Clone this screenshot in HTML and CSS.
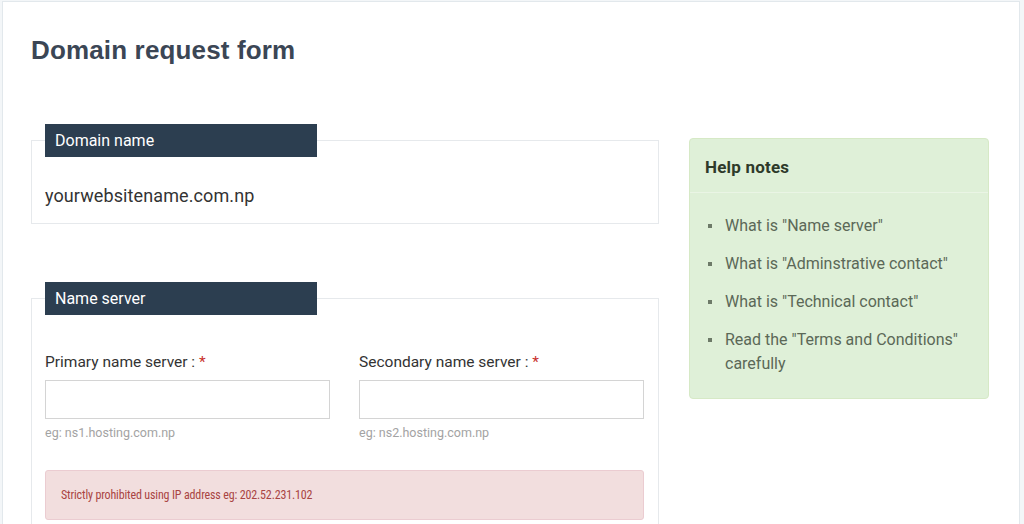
FILE: index.html
```html
<!DOCTYPE html>
<html lang="en">
<head>
<meta charset="utf-8">
<title>Domain request form</title>
<link rel="stylesheet" href="styles.css">
</head>
<body>
<div class="card">
  <h1 class="page-title">Domain request form</h1>
  <div class="layout">
    <div class="main-col">
      <fieldset class="group group-domain">
        <legend class="group-legend">Domain name</legend>
        <div class="domain-value">yourwebsitename.com.np</div>
      </fieldset>
      <fieldset class="group group-ns">
        <legend class="group-legend">Name server</legend>
        <div class="field-row">
          <div class="field">
            <label class="field-label">Primary name server : <span class="req">*</span></label>
            <input class="field-input" type="text">
            <div class="field-hint">eg: ns1.hosting.com.np</div>
          </div>
          <div class="field">
            <label class="field-label">Secondary name server : <span class="req">*</span></label>
            <input class="field-input" type="text">
            <div class="field-hint">eg: ns2.hosting.com.np</div>
          </div>
        </div>
        <div class="alert">Strictly prohibited using IP address eg: 202.52.231.102</div>
      </fieldset>
    </div>
    <aside class="side-col">
      <div class="help-panel">
        <div class="help-heading">Help notes</div>
        <ul class="help-list">
          <li>What is "Name server"</li>
          <li>What is "Adminstrative contact"</li>
          <li>What is "Technical contact"</li>
          <li>Read the "Terms and Conditions" carefully</li>
        </ul>
      </div>
    </aside>
  </div>
</div>
</body>
</html>
```

FILE: styles.css
```css
html, body {
  margin: 0;
  padding: 0;
}
body {
  background: #f3f6f8;
  font-family: Roboto, "Liberation Sans", sans-serif;
  color: #333;
  height: 524px;
  overflow: hidden;
}
.card {
  margin: 1px 4px 0 2px;
  background: #fff;
  border: 1px solid #e2e8ec;
  padding: 0 29px 0 28px;
  height: 560px;
  box-sizing: border-box;
}
.page-title {
  margin: 0;
  padding: 30px 0 0;
  font-family: "Liberation Sans", Arial, sans-serif;
  font-weight: 700;
  font-size: 26px;
  line-height: 36px;
  color: #3b4655;
  letter-spacing: 0.15px;
}
.layout {
  display: flex;
  gap: 30px;
  margin-top: 56px;
  align-items: flex-start;
}
.main-col {
  width: 628px;
  flex: none;
}
.side-col {
  width: 300px;
  flex: none;
  margin-top: 14px;
}
.group {
  margin: 0;
  border: 1px solid #e6e9ec;
  padding: 0 14px 0 13px;
  min-width: 0;
}
.group-legend {
  width: 272px;
  box-sizing: border-box;
  height: 33px;
  padding: 0 10px;
  background: #2c3e50;
  color: #fff;
  font-size: 16px;
  line-height: 33px;
}
.group-domain {
  padding-bottom: 7px;
}
.domain-value {
  padding-top: 19px;
  font-size: 18px;
  line-height: 40px;
  color: #333;
  letter-spacing: 0.1px;
}
.group-ns {
  margin-top: 58px;
  padding-bottom: 20px;
}
.field-row {
  display: grid;
  grid-template-columns: 285px 285px;
  column-gap: 29px;
  padding-top: 36px;
}
.field {
  display: flex;
  flex-direction: column;
}
.field-label {
  font-size: 15.5px;
  line-height: 22px;
  color: #333;
  margin-bottom: 7px;
}
.req {
  color: #c9302c;
}
.field-input {
  box-sizing: border-box;
  height: 39px;
  width: 100%;
  border: 1px solid #d4d4d4;
  margin: 0;
  background: #fff;
}
.field-hint {
  font-size: 12.5px;
  line-height: 14px;
  color: #a3a3a3;
  margin-top: 7px;
}
.alert {
  margin-top: 30px;
  box-sizing: border-box;
  height: 50px;
  padding: 0 15px;
  background: #f2dede;
  border: 1px solid #ebccd1;
  border-radius: 3px;
  color: #a94442;
  font-family: "Liberation Sans Narrow", "Roboto Condensed", Roboto, sans-serif;
  font-size: 12px;
  letter-spacing: -0.15px;
  line-height: 48px;
}
.help-panel {
  background: #dff0d8;
  border: 1px solid #d6e9c6;
  border-radius: 4px;
  height: 261px;
  box-sizing: border-box;
}
.help-heading {
  padding: 0 15px;
  height: 53px;
  line-height: 56px;
  font-size: 17px;
  font-weight: 700;
  color: #2e3a2a;
  letter-spacing: 0.2px;
  border-bottom: 1px solid #eaf5e5;
}
.help-list {
  list-style: none;
  margin: 0;
  padding: 21px 20px 0 35px;
}
.help-list li {
  position: relative;
  font-size: 16px;
  line-height: 24px;
  color: #5b6857;
  margin-bottom: 14px;
}
.help-list li::before {
  content: "";
  position: absolute;
  left: -17px;
  top: 10px;
  width: 4px;
  height: 4px;
  background: #6d7a68;
}
```
